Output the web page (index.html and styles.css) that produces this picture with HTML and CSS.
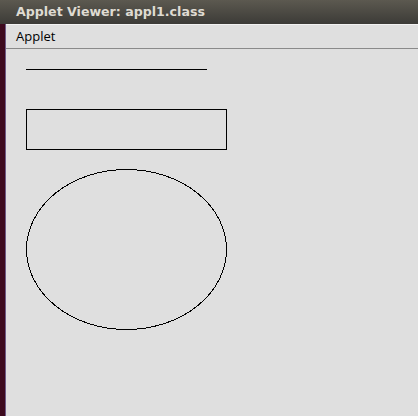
FILE: index.html
```html
<!DOCTYPE html>
<html>
<head>
<meta charset="utf-8">
<link rel="stylesheet" href="styles.css">
</head>
<body>
<div class="window">
  <div class="titlebar">Applet Viewer: appl1.class</div>
  <div class="body">
    <div class="strip"></div>
    <div class="main">
      <div class="menubar"><span class="menu">Applet</span></div>
      <div class="canvas">
        <svg class="drawing" width="412" height="367" viewBox="6 49 412 367" shape-rendering="crispEdges">
          <line x1="26" y1="69.5" x2="207" y2="69.5" stroke="#000" stroke-width="1"/>
          <rect x="26.5" y="109.5" width="200" height="40" fill="none" stroke="#000" stroke-width="1"/>
          <ellipse cx="126.5" cy="249.5" rx="100" ry="80" fill="none" stroke="#000" stroke-width="1"/>
        </svg>
      </div>
    </div>
  </div>
</div>
</body>
</html>
```

FILE: styles.css
```css
html, body {
  margin: 0;
  padding: 0;
  width: 418px;
  height: 416px;
  overflow: hidden;
  background: #dfdfdf;
}
.window {
  display: flex;
  flex-direction: column;
  width: 418px;
  height: 416px;
}
.titlebar {
  height: 24px;
  flex: none;
  box-sizing: border-box;
  padding-left: 16px;
  background: linear-gradient(#5c5950, #3c3b37);
  color: #dfdbd2;
  font-family: "DejaVu Sans", sans-serif;
  font-weight: bold;
  font-size: 12.6px;
  line-height: 24px;
  white-space: nowrap;
}
.body {
  flex: 1;
  display: flex;
  min-height: 0;
}
.strip {
  width: 5px;
  flex: none;
  background: #3d0a1e;
  border-right: 1px solid #6e5a86;
}
.main {
  flex: 1;
  display: flex;
  flex-direction: column;
  background: #dfdfdf;
}
.menubar {
  height: 25px;
  flex: none;
  box-sizing: border-box;
  border-top: 1px solid #f2f2f2;
  border-bottom: 1px solid #8a8a8a;
  background: #dfdfdf;
  padding-left: 10px;
  font-family: "Open Sans", sans-serif;
  font-size: 13px;
  line-height: 23px;
  color: #000;
}
.canvas {
  flex: 1;
  background: #dfdfdf;
}
.drawing {
  display: block;
}
```
